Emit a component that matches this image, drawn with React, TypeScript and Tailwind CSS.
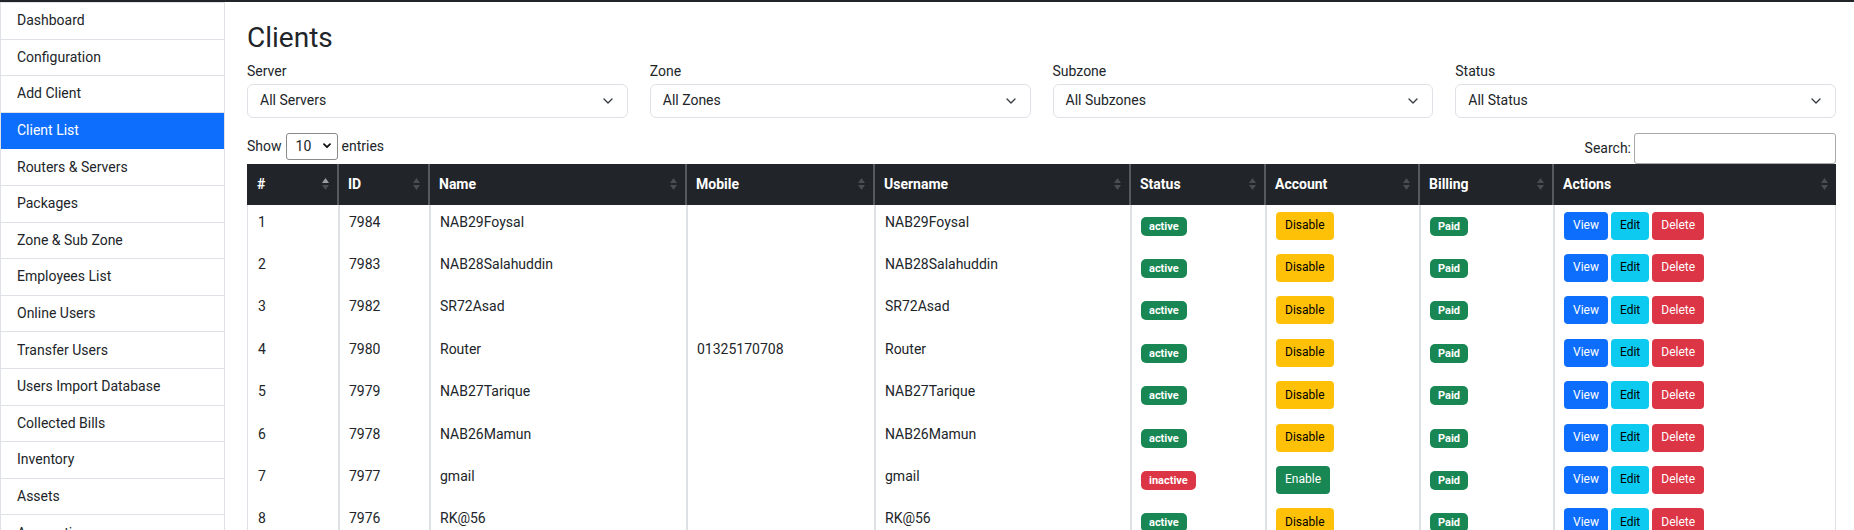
import React from "react";

const NAV_ITEMS = [
  "Dashboard",
  "Configuration",
  "Add Client",
  "Client List",
  "Routers & Servers",
  "Packages",
  "Zone & Sub Zone",
  "Employees List",
  "Online Users",
  "Transfer Users",
  "Users Import Database",
  "Collected Bills",
  "Inventory",
  "Assets",
  "Accounting",
  "Reports",
];

const FILTERS = [
  { label: "Server", value: "All Servers" },
  { label: "Zone", value: "All Zones" },
  { label: "Subzone", value: "All Subzones" },
  { label: "Status", value: "All Status" },
];

const COLUMNS = ["#", "ID", "Name", "Mobile", "Username", "Status", "Account", "Billing", "Actions"];

const GRID = "grid grid-cols-[90px_91px_257px_188px_256px_135px_154px_134px_1fr]";

interface Client {
  id: number;
  name: string;
  mobile: string;
  active: boolean;
}

const CLIENTS: Client[] = [
  { id: 7984, name: "NAB29Foysal", mobile: "", active: true },
  { id: 7983, name: "NAB28Salahuddin", mobile: "", active: true },
  { id: 7982, name: "SR72Asad", mobile: "", active: true },
  { id: 7980, name: "Router", mobile: "01325170708", active: true },
  { id: 7979, name: "NAB27Tarique", mobile: "", active: true },
  { id: 7978, name: "NAB26Mamun", mobile: "", active: true },
  { id: 7977, name: "gmail", mobile: "", active: false },
  { id: 7976, name: "RK@56", mobile: "", active: true },
];

function SortIcon({ asc }: { asc?: boolean }) {
  return (
    <svg width="7" height="12" viewBox="0 0 7 12" className="absolute right-[8px] top-1/2 -translate-y-1/2">
      <polygon points="0,5 3.5,0 7,5" fill={asc ? "#9a9ea3" : "#4a4e53"} />
      <polygon points="0,7 3.5,12 7,7" fill="#4a4e53" />
    </svg>
  );
}

function Chevron() {
  return (
    <svg width="10" height="6" viewBox="0 0 10 6" fill="none">
      <path d="M1 1l4 4 4-4" stroke="#343a40" strokeWidth="1.3" strokeLinecap="round" strokeLinejoin="round" />
    </svg>
  );
}

function Sidebar() {
  return (
    <nav className="w-[225px] shrink-0 border-x border-t border-[#dee2e6] self-start">
      {NAV_ITEMS.map((item) => {
        const active = item === "Client List";
        return (
          <div
            key={item}
            className={`flex h-[36.6px] items-center border-b pl-4 text-[14px] ${
              active ? "border-[#0d6efd] bg-[#0d6efd] text-white" : "border-[#dee2e6] text-[#212529]"
            }`}
          >
            {item}
          </div>
        );
      })}
    </nav>
  );
}

function Badge({ color, children }: { color: string; children: React.ReactNode }) {
  return (
    <span className={`inline-block rounded-[5px] px-[8px] py-[4px] text-[11px] font-bold leading-[11px] text-white ${color}`}>
      {children}
    </span>
  );
}

function Btn({ color, children }: { color: string; children: React.ReactNode }) {
  return (
    <span className={`inline-flex h-[28px] items-center rounded-[4px] px-[9px] text-[12px] ${color}`}>
      {children}
    </span>
  );
}

export default function App() {
  return (
    <div className="flex min-h-screen border-t-2 border-[#212529] bg-white font-['Roboto',sans-serif] text-[#212529]">
      <Sidebar />

      <main className="min-w-0 flex-1 pl-[22px] pr-[18px] pt-[19px]">
        <h3 className="mb-[6px] text-[28px] font-normal leading-[1.2]">Clients</h3>

        {/* Filters */}
        <div className="grid grid-cols-4 gap-x-[22px]">
          {FILTERS.map((f) => (
            <div key={f.label}>
              <div className="mb-[2px] text-[14px] leading-[21px]">{f.label}</div>
              <div className="flex h-[34px] items-center justify-between rounded-[6px] border border-[#dee2e6] pl-[12px] pr-[14px] text-[14px]">
                <span>{f.value}</span>
                <Chevron />
              </div>
            </div>
          ))}
        </div>

        {/* Length + search */}
        <div className="mt-[15px] flex h-[31px] items-start justify-between text-[14px]">
          <div className="flex h-[27px] items-center">
            <span>Show</span>
            <div className="mx-[4px] flex h-[27px] w-[52px] items-center justify-between rounded-[3px] border border-[#8a8a8a] pl-[9px] pr-[6px]">
              <span>10</span>
              <svg width="8" height="6" viewBox="0 0 8 6" fill="none">
                <path d="M1 1.2l3 3 3-3" stroke="#111" strokeWidth="1.8" strokeLinecap="round" strokeLinejoin="round" />
              </svg>
            </div>
            <span>entries</span>
          </div>
          <div className="flex h-[31px] items-center">
            <span className="mr-[3px]">Search:</span>
            <div className="h-[31px] w-[202px] rounded-[3px] border border-[#a9a9a9]" />
          </div>
        </div>

        {/* Table */}
        <div className="text-[14px]">
          <div className={`${GRID} h-[41px] bg-[#212529] font-bold text-white`}>
            {COLUMNS.map((c, i) => (
              <div
                key={c}
                className={`relative flex items-center ${i > 0 ? "border-l-2 border-[#56595d] px-[9px]" : "px-[10px]"}`}
              >
                {c}
                <SortIcon asc={i === 0} />
              </div>
            ))}
          </div>

          <div className="border-x border-[#dee2e6]">
            {CLIENTS.map((c, idx) => {
              const cell = "px-[9px] pt-[7px] leading-[21px] border-l-2 border-[#dee2e6]";
              return (
                <div key={c.id} className={`${GRID} h-[42.4px]`}>
                  <div className="px-[10px] pt-[7px] leading-[21px]">{idx + 1}</div>
                  <div className={cell}>{c.id}</div>
                  <div className={cell}>{c.name}</div>
                  <div className={cell}>{c.mobile}</div>
                  <div className={cell}>{c.name}</div>
                  <div className={`${cell} pt-[10px]`}>
                    {c.active ? (
                      <Badge color="bg-[#198754]">active</Badge>
                    ) : (
                      <Badge color="bg-[#dc3545]">inactive</Badge>
                    )}
                  </div>
                  <div className={cell}>
                    {c.active ? (
                      <Btn color="bg-[#ffc107] text-black">Disable</Btn>
                    ) : (
                      <Btn color="bg-[#198754] text-white">Enable</Btn>
                    )}
                  </div>
                  <div className={`${cell} pt-[10px]`}>
                    <Badge color="bg-[#198754]">Paid</Badge>
                  </div>
                  <div className={`${cell} flex items-start gap-[3px]`}>
                    <Btn color="bg-[#0d6efd] text-white">View</Btn>
                    <Btn color="bg-[#0dcaf0] text-black">Edit</Btn>
                    <Btn color="bg-[#dc3545] text-white">Delete</Btn>
                  </div>
                </div>
              );
            })}
          </div>
        </div>
      </main>
    </div>
  );
}
